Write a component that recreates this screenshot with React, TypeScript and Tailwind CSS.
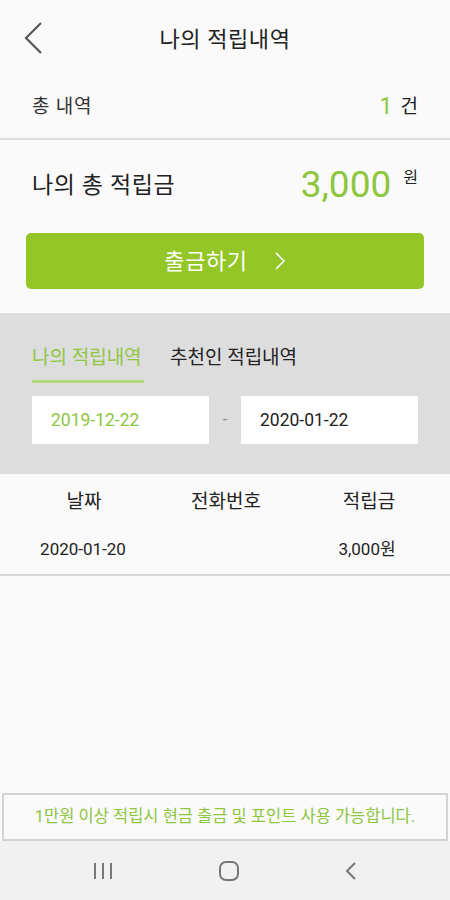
import React from "react";

const font = { fontFamily: "Roboto, 'Noto Sans CJK KR', 'Noto Sans', sans-serif" };

export default function App() {
  return (
    <div className="w-[450px] h-[900px] bg-[#fafafa] flex flex-col text-[#222]" style={font}>
      {/* header */}
      <div className="relative h-[78px] flex items-center justify-center">
        <svg className="absolute left-[24px] top-[22px]" width="20" height="32" viewBox="0 0 20 32">
          <path d="M17 1 L2 16 L17 31" fill="none" stroke="#555" strokeWidth="2.2" />
        </svg>
        <span className="text-[22px] tracking-[0.6px] leading-none text-[#222] mt-[2px]">나의 적립내역</span>
      </div>
      {/* total count */}
      <div className="h-[62px] flex items-center justify-between px-[32px] border-b-2 border-[#dedede]">
        <span className="text-[19px] tracking-[0.8px] text-[#333] mb-[2px]">총 내역</span>
        <span className="flex items-center gap-[8px] mb-[2px]">
          <span className="text-[23px] text-[#8dc63f]">1</span>
          <span className="text-[19px] text-[#222]">건</span>
        </span>
      </div>
      {/* total amount */}
      <div className="flex items-center justify-between pl-[32px] pr-[32px] pt-[8px] h-[80px]">
        <span className="text-[23px] tracking-[0.6px] text-[#222] mt-[4px]">나의 총 적립금</span>
        <span className="flex items-start gap-[12px]">
          <span className="text-[37px] leading-none text-[#8dc63f]">3,000</span>
          <span className="text-[16px] leading-none text-[#222] mt-[4px]">원</span>
        </span>
      </div>
      <div className="px-[26px] pt-[13px]">
        <button className="w-full h-[56px] rounded-[5px] bg-[#93c626] flex items-center justify-center gap-[26px] text-white">
          <span className="text-[22px] tracking-[0.6px]">출금하기</span>
          <svg width="12" height="20" viewBox="0 0 12 20">
            <path d="M2 2 L10 10 L2 18" fill="none" stroke="#fff" strokeWidth="1.6" />
          </svg>
        </button>
      </div>
      {/* gray filter section */}
      <div className="mt-[24px] h-[161px] bg-[#dddddd] px-[32px] pt-[35px]">
        <div className="flex items-end gap-[26px]">
          <div className="flex flex-col w-[112px]">
            <span className="text-[19px] leading-none text-[#8dc63f] whitespace-nowrap h-[22px]">나의 적립내역</span>
            <div className="h-[3px] bg-[#b5d67b] mt-[10px]" />
          </div>
          <span className="text-[19px] leading-none text-[#222] whitespace-nowrap mb-[13px] h-[22px]">추천인 적립내역</span>
        </div>
        <div className="flex items-center mt-[13px]">
          <div className="w-[177px] h-[48px] bg-white flex items-center pl-[19px] text-[17.5px] text-[#8dc63f]">2019-12-22</div>
          <div className="flex-1 text-center text-[16px] text-[#888]">-</div>
          <div className="w-[177px] h-[48px] bg-white flex items-center pl-[19px] text-[17.5px] text-[#222]">2020-01-22</div>
        </div>
      </div>
      {/* table */}
      <div className="grid grid-cols-[168px_116px_166px] pt-[14px]">
        <div className="text-center text-[19px] text-[#222]">날짜</div>
        <div className="text-center text-[19px] text-[#222]">전화번호</div>
        <div className="text-center text-[19px] text-[#222] pl-[4px]">적립금</div>
      </div>
      <div className="grid grid-cols-[166px_116px_168px] h-[59px] items-center border-b-2 border-[#d6d6d6] pt-[10px]">
        <div className="text-center text-[17px] text-[#222]">2020-01-20</div>
        <div />
        <div className="text-center text-[17px] text-[#222] pl-[2px]">3,000원</div>
      </div>
      <div className="flex-1" />
      {/* notice */}
      <div className="mx-[2px] h-[48px] border-2 border-[#d3d3d3] bg-[#fafafa] flex items-center justify-center">
        <span className="text-[16.5px] text-[#8dc63f] whitespace-nowrap">1만원 이상 적립시 현금 출금 및 포인트 사용 가능합니다.</span>
      </div>
      {/* nav bar */}
      <div className="h-[59px] bg-[#f1f1f1] flex items-center justify-around px-[40px]">
        <svg width="22" height="18" viewBox="0 0 22 18">
          <path d="M3 1 V17 M11 1 V17 M19 1 V17" stroke="#777" strokeWidth="2" />
        </svg>
        <svg width="22" height="22" viewBox="0 0 22 22">
          <rect x="2" y="2" width="18" height="18" rx="6" fill="none" stroke="#777" strokeWidth="2" />
        </svg>
        <svg width="14" height="20" viewBox="0 0 14 20">
          <path d="M11 2 L3 10 L11 18" fill="none" stroke="#777" strokeWidth="2" />
        </svg>
      </div>
    </div>
  );
}
